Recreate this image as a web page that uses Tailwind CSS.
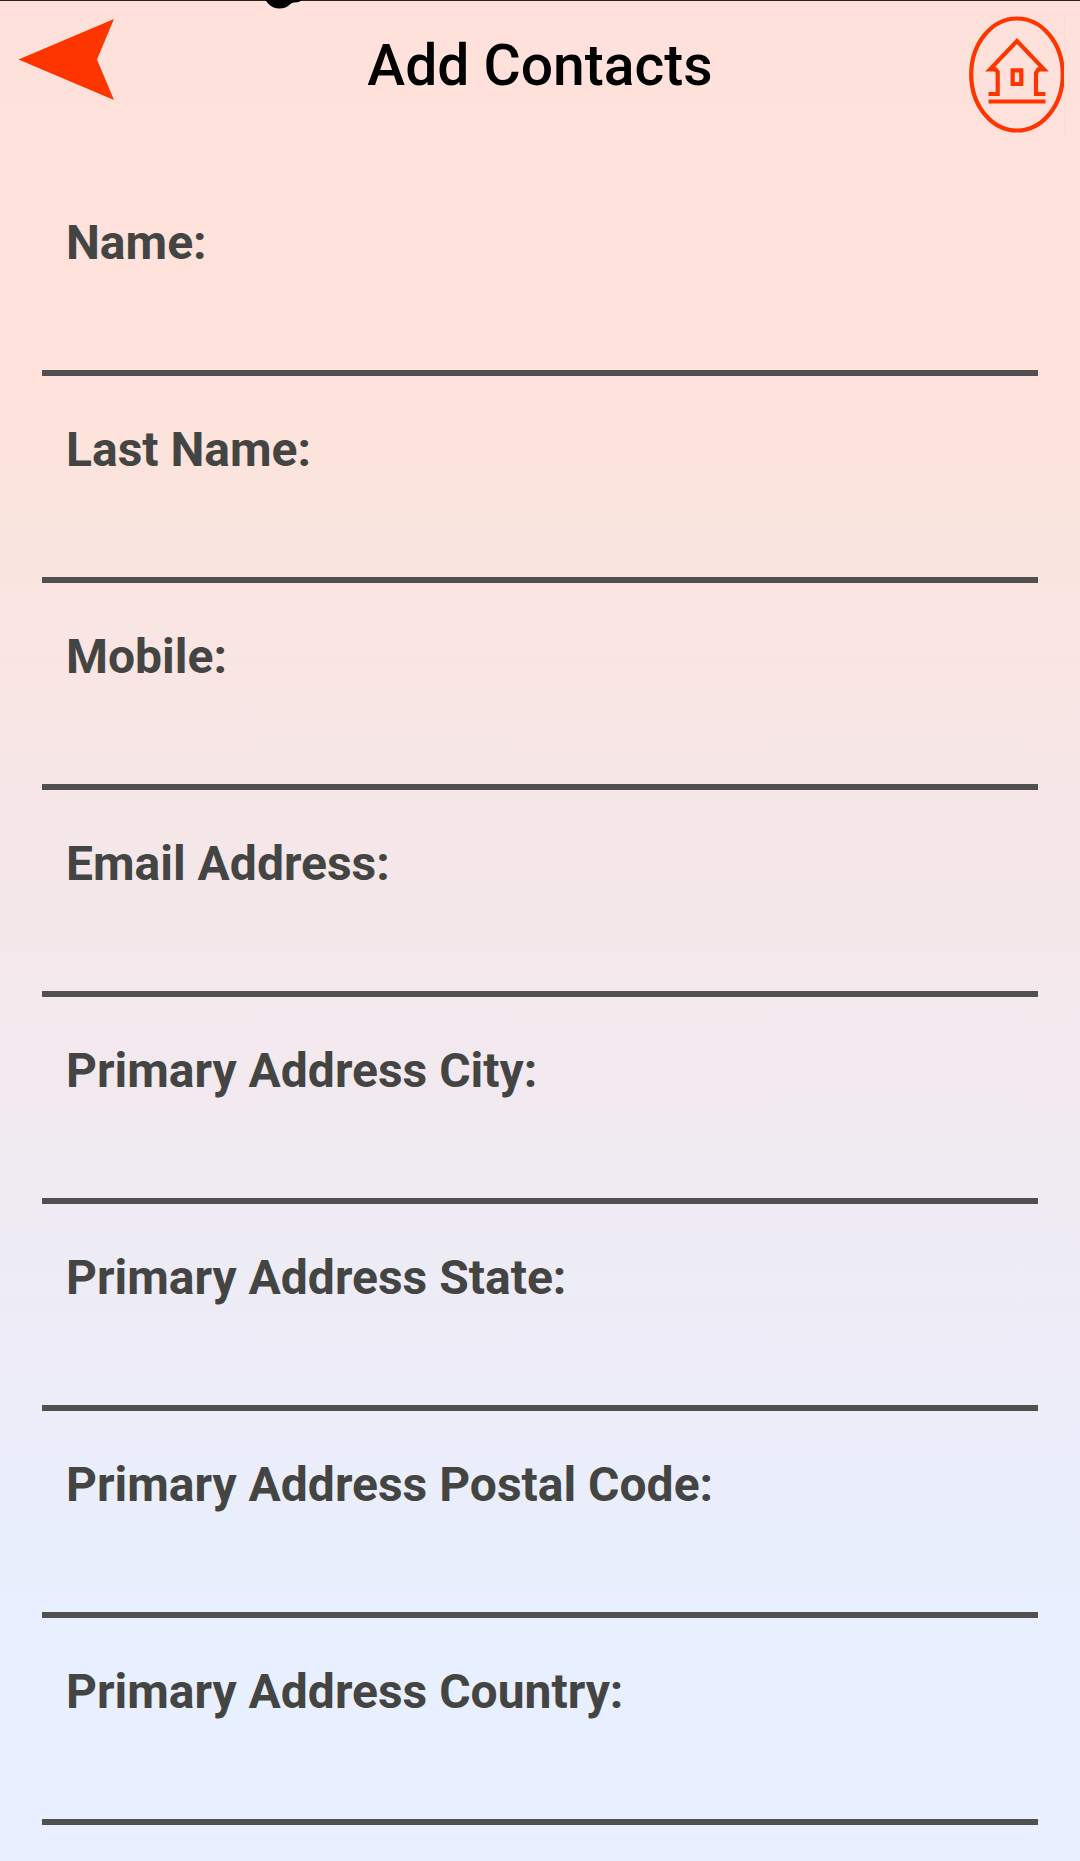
<!DOCTYPE html>
<html lang="en">
<head>
<meta charset="utf-8">
<title>Add Contacts</title>
<script src="https://cdn.jsdelivr.net/npm/@tailwindcss/browser@4"></script>
</head>
<body class="h-[1861px] overflow-hidden font-[Roboto,sans-serif]">
<main class="relative h-full overflow-hidden bg-[linear-gradient(180deg,#ffe1dc_0px,#fee2db_390px,#fbe4dd_480px,#f9e5e3_640px,#f5e7e9_860px,#f3e9ee_1040px,#eeebf3_1210px,#edecf8_1360px,#eaeefb_1500px,#e8effe_1620px,#e8effe_1861px)]">
  <svg class="absolute left-0 top-0" width="320" height="12" viewBox="0 0 320 12" aria-hidden="true">
    <circle cx="279.500" cy="-7" r="15.500"/>
    <path d="M288 0H302Q299 2.700 294 2.500L289 4Z"/>
  </svg>
  <header class="flex h-[169px] justify-between border-t border-[#2b2323] pl-[18px] pr-[15px]">
    <svg class="mt-[18px]" width="97" height="82" viewBox="0 0 97 82" role="img" aria-label="Back"><path d="M.500 40.500 96 0 79 40.500 96 81Z" fill="#ff3500"/></svg>
    <h1 class="mt-[33px] mr-1 text-[57px] leading-[64px] font-medium text-black">Add Contacts</h1>
    <svg class="mt-[15px]" width="96" height="117" viewBox="0 0 96 117" role="img" aria-label="Home" fill="none" stroke="#ff3500" stroke-width="4.200">
      <ellipse cx="48" cy="58.500" rx="45.800" ry="56"/>
      <path d="M19.500 78H28.700V56L26.500 53.300H21L48 25 75 53.300H69.500L67 57V78H76.500M19.500 85.500H76.500"/>
      <path d="M43.700 54.300H52.300V68H43.700Z"/>
      <path d="M95.500 0V117" stroke="#ffd9d1" stroke-width="1"/>
    </svg>
  </header>
  <form class="flex flex-col px-[42px] text-[48px] leading-[56px] font-bold text-[#444543]">
    <label class="h-[207px] border-b-6 border-[#505050] pl-6 pt-[46px]">Name:</label>
    <label class="h-[207px] border-b-6 border-[#505050] pl-6 pt-[46px]">Last Name:</label>
    <label class="h-[207px] border-b-6 border-[#505050] pl-6 pt-[46px]">Mobile:</label>
    <label class="h-[207px] border-b-6 border-[#505050] pl-6 pt-[46px]">Email Address:</label>
    <label class="h-[207px] border-b-6 border-[#505050] pl-6 pt-[46px]">Primary Address City:</label>
    <label class="h-[207px] border-b-6 border-[#505050] pl-6 pt-[46px]">Primary Address State:</label>
    <label class="h-[207px] border-b-6 border-[#505050] pl-6 pt-[46px]">Primary Address Postal Code:</label>
    <label class="h-[207px] border-b-6 border-[#505050] pl-6 pt-[46px]">Primary Address Country:</label>
  </form>
</main>
</body>
</html>
